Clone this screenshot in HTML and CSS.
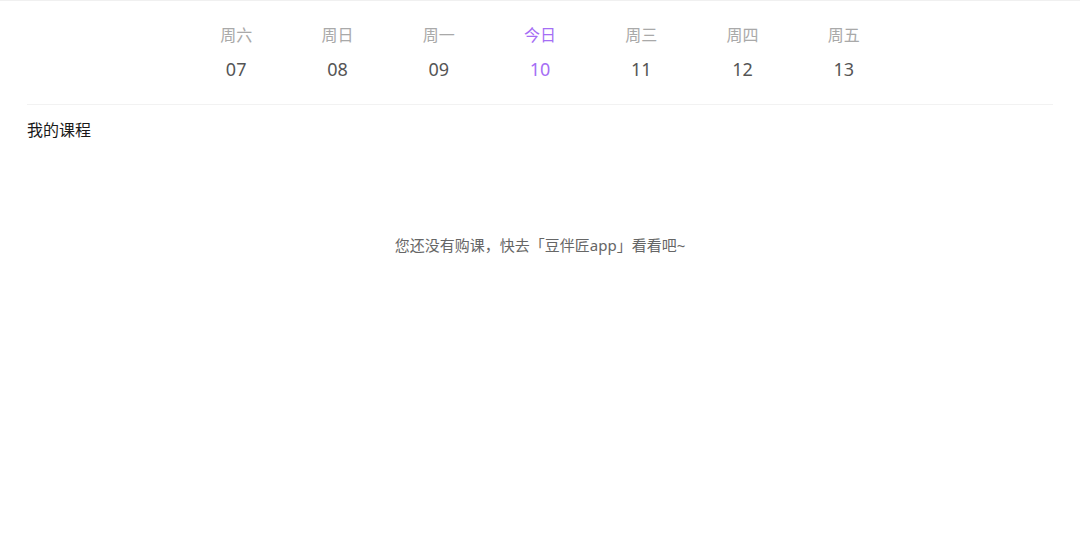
FILE: index.html
```html
<!DOCTYPE html>
<html lang="zh-CN">
<head>
<meta charset="utf-8">
<title>我的课程</title>
<link rel="stylesheet" href="styles.css">
</head>
<body>
<div class="page">
  <div class="wrap">
    <div class="week">
      <div class="day"><span class="label">周六</span><span class="num">07</span></div>
      <div class="day"><span class="label">周日</span><span class="num">08</span></div>
      <div class="day"><span class="label">周一</span><span class="num">09</span></div>
      <div class="day today"><span class="label">今日</span><span class="num">10</span></div>
      <div class="day"><span class="label">周三</span><span class="num">11</span></div>
      <div class="day"><span class="label">周四</span><span class="num">12</span></div>
      <div class="day"><span class="label">周五</span><span class="num">13</span></div>
    </div>
    <h2 class="title">我的课程</h2>
    <p class="empty">您还没有购课，快去「豆伴匠app」看看吧~</p>
  </div>
</div>
</body>
</html>
```

FILE: styles.css
```css
html, body {
  margin: 0;
  padding: 0;
  background: #fff;
}
body {
  font-family: "Noto Sans", "Noto Sans CJK SC", sans-serif;
}
.page {
  border-top: 1px solid #f0f0f0;
  height: 540px;
}
.wrap {
  margin: 0 27px;
}
.week {
  display: grid;
  grid-template-columns: repeat(7, 1fr);
  padding: 23px calc(50% - 354.5px) 23px;
  border-bottom: 1px solid #f2f2f2;
}
.day {
  display: flex;
  flex-direction: column;
  align-items: center;
  gap: 11px;
}
.label {
  font-size: 16px;
  line-height: 22px;
  color: #a9a9a9;
}
.num {
  font-size: 18px;
  line-height: 24px;
  color: #555;
}
.today .label,
.today .num {
  color: #a56ef5;
}
.title {
  margin: 14px 0 0;
  font-size: 16px;
  font-weight: normal;
  line-height: 22px;
  color: #1a1a1a;
}
.empty {
  margin: 93px 0 0;
  text-align: center;
  font-size: 15px;
  line-height: 22px;
  color: #666;
}
```
